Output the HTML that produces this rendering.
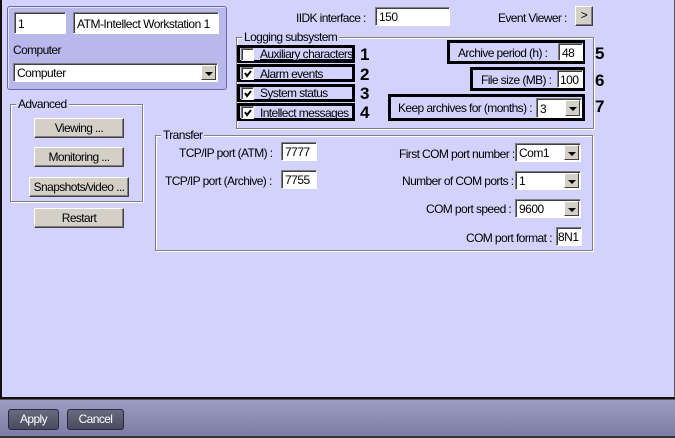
<!DOCTYPE html><html><head><style>
body{margin:0;width:675px;height:438px;overflow:hidden;background:#d2d2fc;font-family:"Liberation Sans",sans-serif;font-size:12px;color:#000;position:relative}
div,span{position:absolute;box-sizing:border-box}
.t{white-space:nowrap;letter-spacing:-0.6px;line-height:14px}
.in{background:#fff;border:1px solid;border-color:#808080 #fff #fff #808080;box-shadow:inset 1px 1px 0 #404040;padding:1px 0 0 3px;white-space:nowrap;letter-spacing:-0.5px;display:flex;align-items:center}
.dd{position:absolute;right:1px;top:1px;bottom:1px;width:15px;background:#d4d0c8;border:1px solid;border-color:#fff #404040 #404040 #fff}
.dd:after{content:"";position:absolute;left:3px;top:6px;border:4px solid transparent;border-top:4px solid #000;border-bottom:0}
.btn{background:#d4d0c8;border:1px solid;border-color:#fff #404040 #404040 #fff;box-shadow:inset -1px -1px 0 #808080;text-align:center;line-height:18px;letter-spacing:-0.6px}
.grp{border:1px solid #808080;box-shadow:1px 1px 0 #fff,inset 1px 1px 0 #fff}
.gt{background:#d2d2fc;padding:0 2px;top:-8px;left:5px}
.bx{border:3px solid #000}
.cb{width:13px;height:13px;background:#fff;border:1px solid;border-color:#808080 #fff #fff #808080;box-shadow:inset 1px 1px 0 #404040}
.ck svg{position:absolute;left:2px;top:2px}
.n{font-weight:bold;font-size:17px;line-height:17px}
</style></head><body>
<div style="left:0;top:0;width:675px;height:399px;border:2px solid #111;border-top:none;border-right:1px solid #555"></div>
<div style="left:7px;top:6px;width:220px;height:84px;background:#b8b8ec;border:1px solid #6868a8;border-radius:3px;box-shadow:inset 1px 1px 0 #e0e0ff"></div>
<div class="in" style="left:14px;top:12px;width:52px;height:22px">1</div>
<div class="in" style="left:73px;top:12px;width:146px;height:22px">ATM-Intellect Workstation 1</div>
<div class="t" style="left:13px;top:43px">Computer</div>
<div class="in" style="left:13px;top:63px;width:205px;height:19px">Computer<span class="dd"></span></div>

<div class="grp" style="left:10px;top:104px;width:133px;height:98px"><span class="t gt">Advanced</span></div>
<div class="btn" style="left:34px;top:118px;width:90px;height:20px">Viewing ...</div>
<div class="btn" style="left:34px;top:147px;width:90px;height:20px">Monitoring ...</div>
<div class="btn" style="left:29px;top:177px;width:100px;height:20px">Snapshots/video ...</div>
<div class="btn" style="left:34px;top:208px;width:90px;height:20px">Restart</div>

<div class="t" style="left:296px;top:11px">IIDK interface :</div>
<div class="in" style="left:375px;top:7px;width:75px;height:19px">150</div>
<div class="t" style="left:498px;top:11px">Event Viewer :</div>
<div class="btn" style="left:575px;top:6px;width:18px;height:20px;line-height:17px">&gt;</div>

<div class="grp" style="left:236px;top:37px;width:358px;height:92px"><span class="t gt">Logging subsystem</span></div>
<div class="bx" style="left:237px;top:45px;width:118px;height:18px"></div>
<div class="bx" style="left:237px;top:64px;width:118px;height:18px"></div>
<div class="bx" style="left:237px;top:84px;width:118px;height:18px"></div>
<div class="bx" style="left:237px;top:103px;width:118px;height:18px"></div>
<div class="cb" style="left:241px;top:48px"></div><div class="t" style="left:260px;top:47px;text-decoration:underline">Auxiliary characters</div>
<div class="cb ck" style="left:241px;top:67px"><svg width="8" height="8"><path d="M1 3l2 3 4-5" stroke="#000" stroke-width="2" fill="none"/></svg></div><div class="t" style="left:260px;top:67px">Alarm events</div>
<div class="cb ck" style="left:241px;top:87px"><svg width="8" height="8"><path d="M1 3l2 3 4-5" stroke="#000" stroke-width="2" fill="none"/></svg></div><div class="t" style="left:260px;top:86px">System status</div>
<div class="cb ck" style="left:241px;top:106px"><svg width="8" height="8"><path d="M1 3l2 3 4-5" stroke="#000" stroke-width="2" fill="none"/></svg></div><div class="t" style="left:260px;top:106px">Intellect messages</div>
<div class="n" style="left:360px;top:46px">1</div><div class="n" style="left:360px;top:66px">2</div><div class="n" style="left:360px;top:85px">3</div><div class="n" style="left:360px;top:104px">4</div>

<div class="bx" style="left:447px;top:40px;width:138px;height:24px"></div>
<div class="t" style="left:458px;top:46px">Archive period (h) :</div>
<div class="in" style="left:558px;top:43px;width:25px;height:18px">48</div>
<div class="n" style="left:595px;top:45px">5</div>
<div class="bx" style="left:470px;top:67px;width:115px;height:24px"></div>
<div class="t" style="left:481px;top:73px">File size (MB) :</div>
<div class="in" style="left:557px;top:70px;width:26px;height:18px;padding-left:2px">100</div>
<div class="n" style="left:595px;top:72px">6</div>
<div class="bx" style="left:388px;top:94px;width:197px;height:27px"></div>
<div class="t" style="left:398px;top:101px">Keep archives for (months) :</div>
<div class="in" style="left:536px;top:98px;width:46px;height:20px">3<span class="dd"></span></div>
<div class="n" style="left:595px;top:98px">7</div>

<div class="grp" style="left:155px;top:135px;width:438px;height:116px"><span class="t gt">Transfer</span></div>
<div class="t" style="left:179px;top:146px">TCP/IP port (ATM) :</div>
<div class="in" style="left:281px;top:142px;width:36px;height:19px">7777</div>
<div class="t" style="left:165px;top:174px">TCP/IP port (Archive) :</div>
<div class="in" style="left:281px;top:170px;width:36px;height:19px">7755</div>
<div class="t" style="left:399px;top:147px">First COM port number :</div>
<div class="in" style="left:515px;top:143px;width:66px;height:19px">Com1<span class="dd"></span></div>
<div class="t" style="left:402px;top:174px">Number of COM ports :</div>
<div class="in" style="left:515px;top:171px;width:66px;height:19px">1<span class="dd"></span></div>
<div class="t" style="left:426px;top:202px">COM port speed :</div>
<div class="in" style="left:515px;top:199px;width:66px;height:19px">9600<span class="dd"></span></div>
<div class="t" style="left:466px;top:231px">COM port format :</div>
<div class="in" style="left:556px;top:227px;width:26px;height:19px;padding-left:1px">8N1</div>

<div style="left:0;top:399px;width:675px;height:39px;background:linear-gradient(#9c9cc4,#7c7ca4);border-top:1px solid #555;border-bottom:2px solid #333"></div>
<div style="left:8px;top:409px;width:51px;height:21px;background:linear-gradient(#6a6a80,#4a4a5e);border:1px solid #2a2a38;border-radius:3px;color:#fff;text-align:center;line-height:19px;letter-spacing:-0.6px">Apply</div>
<div style="left:67px;top:409px;width:57px;height:21px;background:linear-gradient(#6a6a80,#4a4a5e);border:1px solid #2a2a38;border-radius:3px;color:#fff;text-align:center;line-height:19px;letter-spacing:-0.6px">Cancel</div>
</body></html>
